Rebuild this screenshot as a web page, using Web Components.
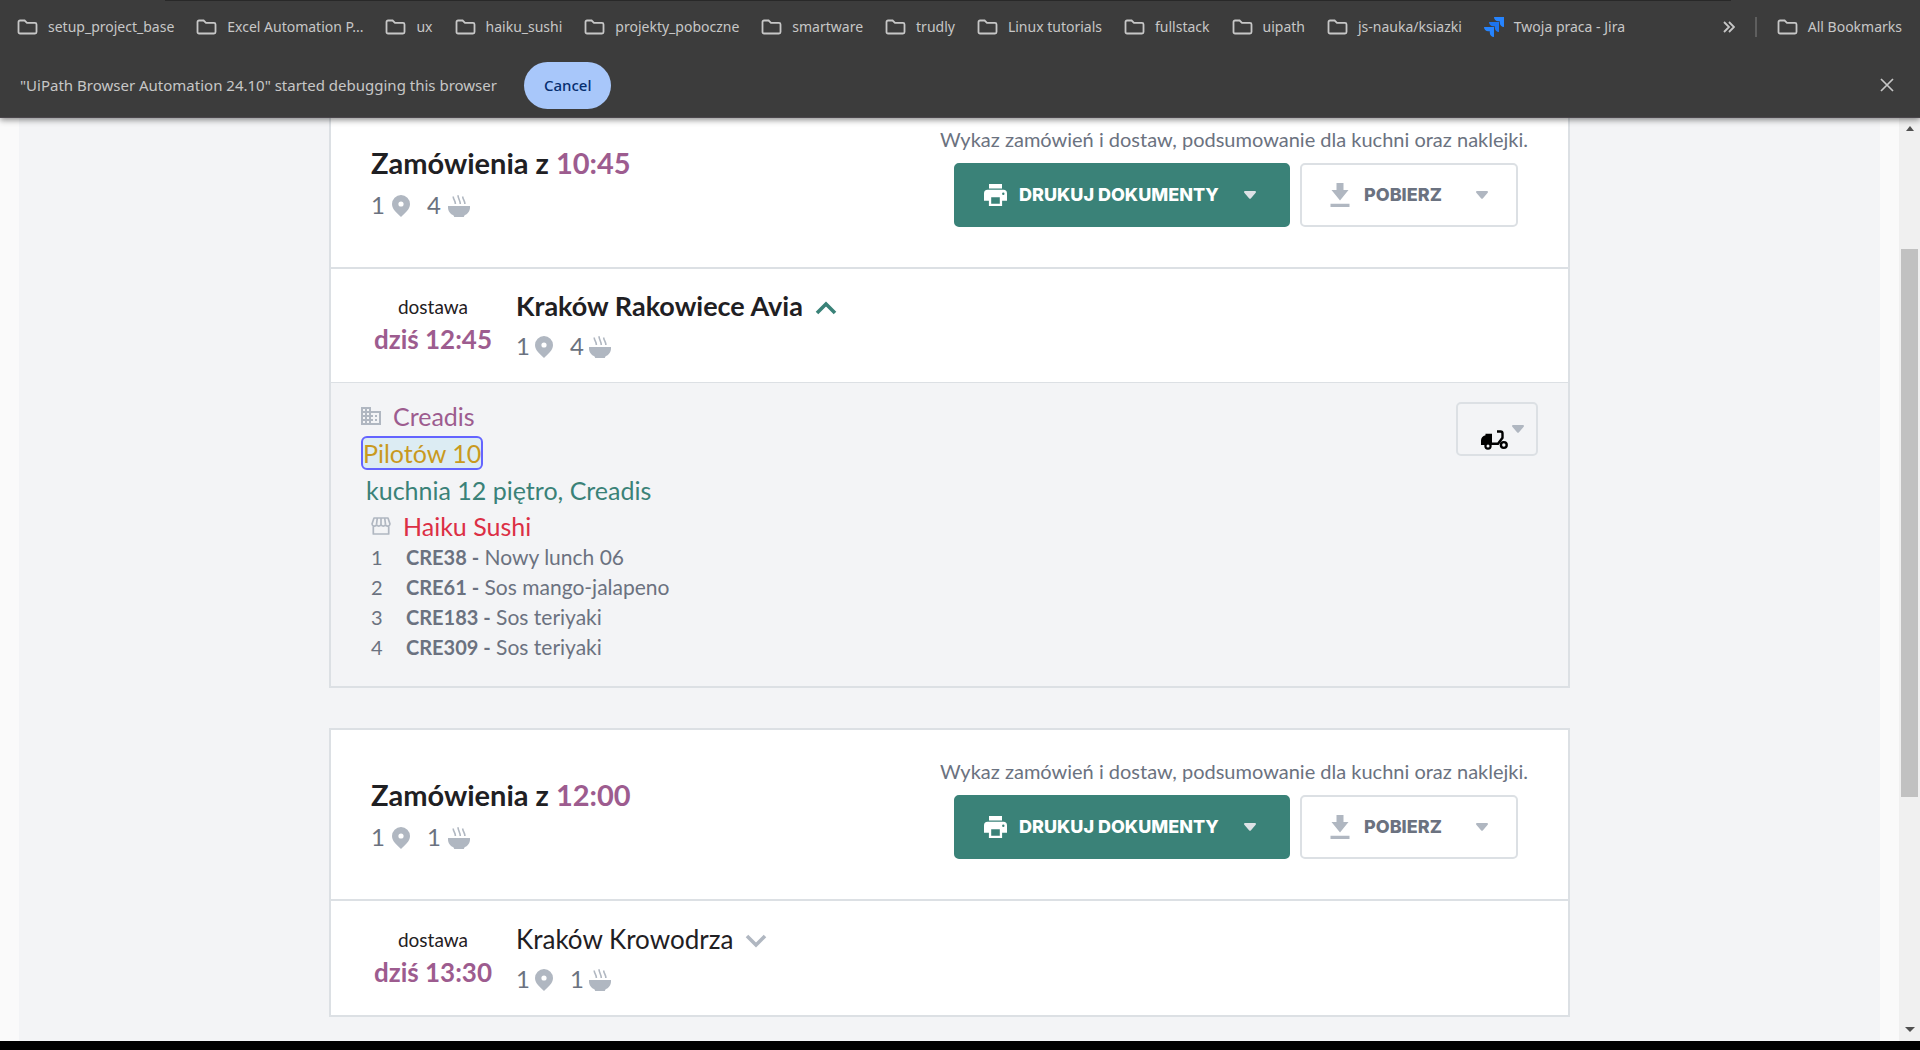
<!DOCTYPE html>
<html lang="pl">
<head>
<meta charset="utf-8">
<title>Zamówienia</title>
<style>
  :root {
    --ink: #1f2023; --muted: #6b7280; --soft: #b0b7c1; --line: #dce0e4;
    --purple: #9d5c8f; --green: #3a8278; --page: #f3f4f6;
  }
  html, body { height: 100%; }
  body {
    margin: 0; display: flex; flex-direction: column; overflow: hidden; background: #000;
    font-family: Lato, "Open Sans", sans-serif; color: var(--ink);
  }
</style>
</head>
<body>
<browser-bar>
  <bookmark-link>setup_project_base</bookmark-link>
  <bookmark-link>Excel Automation P...</bookmark-link>
  <bookmark-link>ux</bookmark-link>
  <bookmark-link>haiku_sushi</bookmark-link>
  <bookmark-link>projekty_poboczne</bookmark-link>
  <bookmark-link>smartware</bookmark-link>
  <bookmark-link>trudly</bookmark-link>
  <bookmark-link>Linux tutorials</bookmark-link>
  <bookmark-link>fullstack</bookmark-link>
  <bookmark-link>uipath</bookmark-link>
  <bookmark-link>js-nauka/ksiazki</bookmark-link>
  <bookmark-link icon="jira">Twoja praca - Jira</bookmark-link>
  <bookmark-link slot="all">All Bookmarks</bookmark-link>
  <span slot="message">"UiPath Browser Automation 24.10" started debugging this browser</span>
</browser-bar>

<page-view>
  <order-group time="10:45" places="1" meals="4" continued>
    <delivery-row time="dziś 12:45" name="Kraków Rakowiece Avia" places="1" meals="4" open></delivery-row>
    <delivery-details company="Creadis" address="Pilotów 10" note="kuchnia 12 piętro, Creadis" kitchen="Haiku Sushi">
      <meal-item number="1" code="CRE38">Nowy lunch 06</meal-item>
      <meal-item number="2" code="CRE61">Sos mango-jalapeno</meal-item>
      <meal-item number="3" code="CRE183">Sos teriyaki</meal-item>
      <meal-item number="4" code="CRE309">Sos teriyaki</meal-item>
    </delivery-details>
  </order-group>
  <order-group time="12:00" places="1" meals="1">
    <delivery-row time="dziś 13:30" name="Kraków Krowodrza" places="1" meals="1"></delivery-row>
  </order-group>
</page-view>
<bottom-edge></bottom-edge>

<script>
const icons = {
  folder: [21, 16, '<path d="M1.5 3A1.5 1.5 0 0 1 3 1.5h4.6l2.4 2.4h8a1.5 1.5 0 0 1 1.5 1.5v7.6a1.5 1.5 0 0 1-1.5 1.5H3A1.5 1.5 0 0 1 1.5 13z" fill="none" stroke="currentColor" stroke-width="1.8"/>'],
  jira: [20, 20, '<path d="M10 0h10v10c-2.4 0-4.2-1.8-4.2-4.2V4.2h-1.6C11.8 4.2 10 2.4 10 0z" fill="#2684ff"/><path d="M5 5h10v10c-2.4 0-4.2-1.8-4.2-4.2V9.2H9.2C6.8 9.2 5 7.4 5 5z" fill="#1d74ee"/><path d="M0 10h10v10c-2.4 0-4.2-1.8-4.2-4.2v-1.6H4.2C1.8 14.2 0 12.4 0 10z" fill="#2684ff"/>'],
  more: [12, 12, '<path d="M1 1l5 5-5 5M6 1l5 5-5 5" fill="none" stroke="currentColor" stroke-width="1.8"/>'],
  close: [14, 14, '<path d="M1 1l12 12M13 1L1 13" stroke="currentColor" stroke-width="1.7"/>'],
  pin: [18, 22, '<path fill-rule="evenodd" d="M9 0a9 9 0 0 0-9 9c0 5.5 5 8.8 9 13 4-4.2 9-7.5 9-13a9 9 0 0 0-9-9zm0 11.6a2.6 2.6 0 1 1 0-5.2 2.6 2.6 0 0 1 0 5.2z" fill="currentColor"/>'],
  bowl: [22, 22, '<path d="M0 11h22v1.5c0 3.6-2.3 6.7-5.6 7.9l-.6 1.6H6.2l-.6-1.6C2.3 19.2 0 16.1 0 12.5z" fill="currentColor"/><path d="M5.2 1.5c0 3 2.2 4 2.2 7.5M10 .2c0 3.6 2.3 5 2.3 8.8M14.7 1.5c0 3 2.2 4 2.2 7.5" fill="none" stroke="currentColor" stroke-width="1.6"/>'],
  print: [23, 22, '<path fill-rule="evenodd" d="M5 0h13v4.500H5zM3.600 5.800h15.800A3.600 3.600 0 0 1 23 9.400v7.300h-4.900V22H4.900v-5.300H0V9.400a3.600 3.600 0 0 1 3.600-3.600zM7.200 13.200v6.500h8.600v-6.500zM19.300 8.600a1.200 1.200 0 1 0 0 2.400 1.200 1.200 0 0 0 0-2.400z" fill="currentColor"/>'],
  download: [20, 24, '<path d="M6.500 0h7v7h5L10 17.500 1.500 7h5zM.5 20.700h19V24H.5z" fill="currentColor"/>'],
  caret: [12, 8, '<path d="M1 0h10a1 1 0 0 1 .7 1.700L7 7.300a1.400 1.400 0 0 1-2 0L.3 1.700A1 1 0 0 1 1 0z" fill="currentColor"/>'],
  up: [22, 14, '<path d="M2 12l9-9 9 9" fill="none" stroke="currentColor" stroke-width="3.6"/>'],
  down: [22, 14, '<path d="M2 2l9 9 9-9" fill="none" stroke="currentColor" stroke-width="3.6"/>'],
  office: [20, 18, '<path fill-rule="evenodd" d="M10 4V0H0v18h20V4zM4 16H2v-2h2zm0-4H2v-2h2zm0-4H2V6h2zm0-4H2V2h2zm4 12H6v-2h2zm0-4H6v-2h2zm0-4H6V6h2zm0-4H6V2h2zm10 12h-8v-2h2v-2h-2v-2h2V8h-2V6h8zm-2-8h-2v2h2zm0 4h-2v2h2z" fill="currentColor"/>'],
  shop: [20, 18, '<path d="M3 1h14l2 6a2.3 2.3 0 0 1-4.5.4A2.3 2.3 0 0 1 10 7.400a2.3 2.3 0 0 1-4.5 0A2.3 2.3 0 0 1 1 7zM6.3 1L5.5 7.4M10 1v6.4M13.7 1l.8 6.4M2.3 9.5V17h15.400V9.5" fill="none" stroke="currentColor" stroke-width="1.7" stroke-linejoin="round"/>'],
  scooter: [27, 20, '<path d="M4.5 3.800H11V15H0v-4.500C0 8 1.500 5.800 4.500 5.200z" fill="currentColor"/><path d="M16 1.500h3.500c1.300 0 2 .7 2 2v4.300L17 13.800h-6.500" fill="none" stroke="currentColor" stroke-width="2.4"/><circle cx="7" cy="16" r="2.6" fill="#f3f4f6" stroke="currentColor" stroke-width="2.2"/><circle cx="22.8" cy="15" r="2.9" fill="#f3f4f6" stroke="currentColor" stroke-width="2.4"/>'],
  scrollup: [8, 5, '<path d="M0 5l4-5 4 5z" fill="currentColor"/>'],
  scrolldown: [10, 5, '<path d="M0 0h10L5 5z" fill="currentColor"/>']
};

const define = (tag, render) => customElements.define(tag, class extends HTMLElement {
  constructor() {
    super();
    this.attachShadow({ mode: 'open' });
  }
  connectedCallback() {
    const attr = name => this.getAttribute(name) || '';
    this.shadowRoot.innerHTML = render(attr, this);
  }
});

define('ui-icon', attr => {
  const [w, h, body] = icons[attr('name')];
  return `<style>:host{display:block;flex:none}svg{display:block}</style>
    <svg width="${w}" height="${h}" viewBox="0 0 ${w} ${h}" aria-hidden="true">${body}</svg>`;
});

define('bookmark-link', attr => `
  <style>
    :host { display: block; flex: none; }
    a { display: flex; align-items: center; gap: 10px; color: inherit; text-decoration: none; white-space: nowrap; }
    ui-icon { color: #c7c7c7; }
  </style>
  <a href="#"><ui-icon name="${attr('icon') || 'folder'}"></ui-icon><slot></slot></a>`);

define('browser-bar', () => `
  <style>
    :host {
      display: block; flex: none; position: relative; z-index: 1; background: #3c3c3c; color: #c7c7c7;
      font: 14px/20px "Noto Sans", "Open Sans", sans-serif; border-bottom: 1px solid #4b474c;
      box-shadow: 0 2px 6px rgba(0, 0, 0, .45);
    }
    .tab-edge { height: 1px; margin: 0 189px 0 165px; background: #282828; }
    nav { display: flex; align-items: center; height: 52px; padding: 0 18px 0 17px; gap: 22px; }
    .end { display: flex; align-items: center; gap: 20px; margin-left: auto; }
    .rule { width: 2px; height: 20px; background: #5e5e5e; }
    button { border: 0; background: none; color: inherit; font: inherit; padding: 0; }
    .info { display: flex; align-items: center; height: 64px; padding: 0 26px 0 20px; gap: 27px; font-size: 15px; }
    .cancel { height: 47px; padding: 0 20px; border-radius: 24px; background: #a8c7fa; color: #062e6f; font-weight: 500; }
    .close { margin-left: auto; }
  </style>
  <div class="tab-edge"></div>
  <nav aria-label="Bookmarks">
    <slot></slot>
    <div class="end">
      <button aria-label="More bookmarks"><ui-icon name="more"></ui-icon></button>
      <div class="rule"></div>
      <slot name="all"></slot>
    </div>
  </nav>
  <div class="info">
    <slot name="message"></slot>
    <button class="cancel">Cancel</button>
    <button class="close" aria-label="Close"><ui-icon name="close"></ui-icon></button>
  </div>`);

define('scroll-rail', () => `
  <style>
    :host { display: flex; flex-direction: column; align-items: center; justify-content: space-between;
      box-sizing: border-box; flex: none; width: 21px; padding: 8px 0 9px; background: #f0f0f0; color: #505050; }
    .track { flex: 1; width: 17px; display: flex; flex-direction: column; }
    .before { flex: 118; }
    .thumb { flex: 548; background: #c1c1c1; }
    .after { flex: 230; }
  </style>
  <ui-icon name="scrollup"></ui-icon>
  <div class="track"><div class="before"></div><div class="thumb"></div><div class="after"></div></div>
  <ui-icon name="scrolldown"></ui-icon>`);

define('page-view', () => `
  <style>
    :host { display: flex; flex: 1; min-height: 0; background: #fafafa; }
    main { flex: 1; min-width: 0; margin: 0 19px; background: var(--page); overflow: hidden; }
    .cards { display: flex; flex-direction: column; gap: 40px; max-width: 1241px; margin: 0 auto; }
  </style>
  <main><div class="cards"><slot></slot></div></main>
  <scroll-rail></scroll-rail>`);

define('bottom-edge', () => `<style>:host{display:block;flex:none;height:9px;background:#000}</style>`);

define('count-pair', attr => `
  <style>
    :host { display: flex; gap: 17px; font-size: 24px; line-height: 32px; color: var(--muted); }
    span { display: flex; align-items: center; gap: var(--count-gap, 7px); }
    ui-icon { color: var(--soft); padding-top: 2px; }
  </style>
  <span>${attr('places')}<ui-icon name="pin"></ui-icon></span>
  <span>${attr('meals')}<ui-icon name="bowl"></ui-icon></span>`);

define('menu-button', attr => `
  <style>
    :host { display: block; }
    button {
      display: flex; align-items: center; gap: 14px; box-sizing: border-box; width: 100%; height: 64px;
      padding: 0 28px; border: 2px solid var(--line); border-radius: 5px; background: #fff; color: var(--muted);
      font: 800 18px/24px Inter, "Open Sans", sans-serif;
    }
    ui-icon { color: var(--soft); }
    ui-icon:last-child { margin-left: auto; }
    :host([primary]) button { gap: 12px; padding-right: 32px; background: var(--green); border-color: var(--green); color: #fff; }
    :host([primary]) ui-icon { color: #fff; }
    :host([primary]) ui-icon:last-child { color: #dde2e6; }
  </style>
  <button aria-haspopup="menu"><ui-icon name="${attr('icon')}"></ui-icon><slot></slot><ui-icon name="caret"></ui-icon></button>`);

define('order-group', attr => `
  <style>
    :host { display: block; background: #fff; border: 2px solid var(--line); }
    header { display: flex; justify-content: space-between; align-items: flex-start; padding: 27px 40px 40px; }
    :host([continued]) { border-top: 0; }
    :host([continued]) header { padding-top: 7px; }
    .title { display: flex; flex-direction: column; gap: 8px; padding-top: 20px; }
    h2 { margin: 0; font-size: 29px; line-height: 36px; font-weight: 700; }
    h2 span { color: var(--purple); }
    .print { display: flex; flex-direction: column; gap: 10px; }
    p { margin: 0; font-size: 20px; line-height: 28px; color: var(--muted); }
    .buttons { display: flex; justify-content: flex-end; gap: 10px; padding-right: 10px; }
    .buttons :first-child { width: 336px; }
    .buttons :last-child { width: 218px; }
  </style>
  <header>
    <div class="title">
      <h2>Zamówienia z <span>${attr('time')}</span></h2>
      <count-pair places="${attr('places')}" meals="${attr('meals')}"></count-pair>
    </div>
    <div class="print">
      <p>Wykaz zamówień i dostaw, podsumowanie dla kuchni oraz naklejki.</p>
      <div class="buttons">
        <menu-button primary icon="print">DRUKUJ DOKUMENTY</menu-button>
        <menu-button icon="download">POBIERZ</menu-button>
      </div>
    </div>
  </header>
  <slot></slot>`);

define('delivery-row', (attr, host) => `
  <style>
    :host { display: flex; gap: 21px; padding: 22px 40px 20px; border-top: 2px solid var(--line); --count-gap: 5px; }
    :host([open]) { padding: 21px 40px 20px; }
    .when { display: flex; flex-direction: column; align-items: center; gap: 4px; width: 124px; padding-top: 5px; }
    .when span { font-size: 19px; line-height: 24px; }
    .when strong { font-size: 26px; line-height: 32px; font-weight: 700; color: var(--purple); white-space: nowrap; }
    .where { display: flex; flex-direction: column; gap: 8px; }
    button { display: flex; align-items: center; gap: 12px; padding: 0; border: 0; background: none; color: inherit;
      font: inherit; font-size: 26px; line-height: 32px; }
    button ui-icon { padding-top: 4px; color: var(--soft); }
    :host([open]) button { font-size: 27px; font-weight: 700; }
    :host([open]) button ui-icon { color: var(--green); }
  </style>
  <div class="when"><span>dostawa</span><strong>${attr('time')}</strong></div>
  <div class="where">
    <button aria-expanded="${host.hasAttribute('open')}">${attr('name')}<ui-icon name="${host.hasAttribute('open') ? 'up' : 'down'}"></ui-icon></button>
    <count-pair places="${attr('places')}" meals="${attr('meals')}"></count-pair>
  </div>`);

define('meal-item', attr => `
  <style>
    :host { display: flex; font-size: 20px; line-height: 30px; color: var(--muted); }
    .number { width: 35px; }
    .meal { font-size: 21px; }
    b { font-size: 20px; font-weight: 700; }
  </style>
  <span class="number">${attr('number')}</span><span class="meal"><b>${attr('code')} -</b> <slot></slot></span>`);

define('delivery-details', attr => `
  <style>
    :host { display: flex; justify-content: space-between; align-items: flex-start; padding: 17px 30px 24px;
      border-top: 1px solid var(--line); background: var(--page); }
    .info { display: flex; flex-direction: column; align-items: flex-start; gap: 4px; font-size: 25px; line-height: 32px; }
    .line { display: flex; align-items: center; gap: 12px; }
    ui-icon { color: var(--soft); }
    .company { color: var(--purple); }
    .address { border: 2px solid #6464ff; border-radius: 6px; background: #dcecf3; color: #c99a1e; line-height: 30px; text-decoration: none; }
    .note { padding-left: 5px; color: var(--green); }
    .kitchen { color: #dc2f45; }
    .shop { display: flex; flex-direction: column; padding-left: 10px; }
    button { display: flex; align-items: center; justify-content: flex-end; gap: 4px; box-sizing: border-box; width: 82px; height: 54px;
      margin-top: 2px; padding: 0 12px; border: 2px solid var(--line); border-radius: 5px; background: none; }
    .ride { padding-top: 21px; color: #000; }
  </style>
  <div class="info">
    <div class="line company"><ui-icon name="office"></ui-icon>${attr('company')}</div>
    <a class="address" href="#">${attr('address')}</a>
    <div class="note">${attr('note')}</div>
    <div class="shop">
      <div class="line kitchen"><ui-icon name="shop"></ui-icon>${attr('kitchen')}</div>
      <slot></slot>
    </div>
  </div>
  <button aria-label="Dostawca" aria-haspopup="menu"><ui-icon class="ride" name="scooter"></ui-icon><ui-icon name="caret"></ui-icon></button>`);
</script>
</body>
</html>
